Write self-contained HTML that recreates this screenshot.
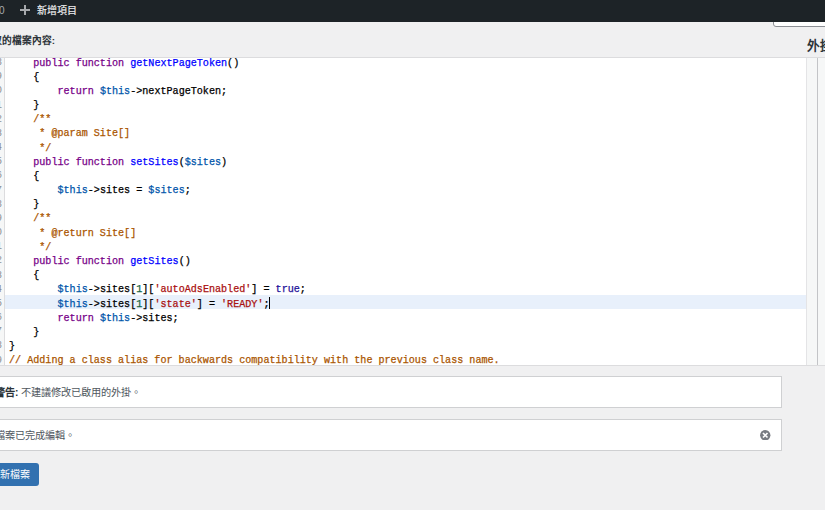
<!DOCTYPE html>
<html lang="zh-TW"><head><meta charset="utf-8">
<style>
html,body{margin:0;padding:0;}
body{width:825px;height:510px;overflow:hidden;background:#f0f0f1;position:relative;font-family:"Liberation Sans",sans-serif;color:#1d2327;}
#bar{position:absolute;left:0;top:0;width:825px;height:22px;background:#1d2327;z-index:5;}
#bar .cnt{position:absolute;left:-1px;top:4px;font-size:10px;line-height:14px;color:#a7aaad;}
#bar .plus{position:absolute;left:20px;top:5px;width:10px;height:10px;}
#bar .plus:before{content:"";position:absolute;left:4px;top:0;width:2px;height:10px;background:#a7aaad;}
#bar .plus:after{content:"";position:absolute;left:0;top:4px;width:10px;height:2px;background:#a7aaad;}
#bar .new{position:absolute;left:37px;top:3.5px;font-size:10px;line-height:14px;color:#f0f0f1;-webkit-text-stroke:0.15px #f0f0f1;}
#sel{position:absolute;left:773px;top:10px;width:80px;height:15px;background:#fff;border:1px solid #8c8f94;border-radius:3px;}
#title{position:absolute;left:-18.2px;top:34.3px;font-size:9.7px;font-weight:bold;line-height:14px;color:#2c3338;white-space:nowrap;}
#side{position:absolute;left:806.8px;top:37.8px;font-size:12.6px;letter-spacing:0.6px;font-weight:bold;line-height:16px;color:#2c3338;white-space:nowrap;}
#ed{position:absolute;left:0;top:57px;width:825px;height:309px;background:#fff;overflow:hidden;border-top:1px solid #dcdcde;border-bottom:1px solid #dcdcde;box-sizing:border-box;}
#gut{position:absolute;left:-30px;top:0;width:34px;height:100%;background:#f6f7f7;border-right:1px solid #dcdcde;}
#vs1{position:absolute;left:806px;top:0;width:11px;height:100%;background:#f6f7f7;border-left:1px solid #e4e4e6;box-sizing:border-box;}
#vs2{position:absolute;left:817px;top:0;width:10px;height:100%;background:#f6f7f7;border-left:1px solid #c3c4c7;box-sizing:border-box;}
.ln{position:absolute;left:5px;width:801px;height:14.17px;}
.ln.act{background:#e8f0fb;}
.gn{position:absolute;left:-36px;width:33px;text-align:right;z-index:2;}
.ln .gn{top:2px;font-family:"Liberation Mono",monospace;font-size:10.1px;line-height:14.17px;color:#8c8f94;}
.tx{position:absolute;left:4px;top:2.5px;font-family:"Liberation Mono",monospace;font-size:10.1px;line-height:14.17px;white-space:pre;color:#000;-webkit-text-stroke:0.25px;}
.k{color:#770088}.d{color:#0000ff}.v{color:#0055aa}.s{color:#aa1111}.c{color:#aa5500}.a{color:#221199}.n{color:#116644}
.cur{display:inline-block;width:1px;height:12px;background:#000;vertical-align:-2px;margin-left:-1px;}
.notice{position:absolute;left:-20px;width:801.5px;background:#fff;border:1px solid #cfd0d2;box-sizing:border-box;font-size:10px;line-height:14px;color:#50575e;}
#n1{top:376px;height:31.5px;}
#n2{top:419px;height:32px;}
.notice .t{position:absolute;top:10px;white-space:nowrap;font-size:10.2px;}
#n1 .t{left:14.1px;top:9px;}
.notice b{color:#2c3338;}
#n2 .t{left:14px;top:9.3px;}
#x{position:absolute;left:760px;top:429.5px;width:10.5px;height:10.5px;}
#btn{position:absolute;left:-20px;top:462.5px;width:58.5px;height:23px;background:#3271b0;border-radius:3px;color:#fff;font-size:10px;line-height:23px;}
#btn span{position:absolute;left:10px;top:0.3px;white-space:nowrap;}
</style></head><body>
<div id="bar"><div class="cnt">0</div><div class="plus"></div><div class="new">新增項目</div></div>
<div id="sel"></div>
<div id="title">選取的檔案內容:</div>
<div id="side">外掛檔案</div>
<div id="ed">
<div id="gut"></div>
<div style="position:absolute;left:0;top:-58px;width:825px;height:400px;">
<div class="ln" style="top:54.00px"><div class="gn">108</div><div class="tx">    <span class="k">public</span> <span class="k">function</span> <span class="d">getNextPageToken</span>()</div></div>
<div class="ln" style="top:68.17px"><div class="gn">109</div><div class="tx">    {</div></div>
<div class="ln" style="top:82.34px"><div class="gn">110</div><div class="tx">        <span class="k">return</span> <span class="v">$this</span>-&gt;nextPageToken;</div></div>
<div class="ln" style="top:96.51px"><div class="gn">111</div><div class="tx">    }</div></div>
<div class="ln" style="top:110.68px"><div class="gn">112</div><div class="tx">    <span class="c">/**</span></div></div>
<div class="ln" style="top:124.85px"><div class="gn">113</div><div class="tx">     <span class="c">* @param Site[]</span></div></div>
<div class="ln" style="top:139.02px"><div class="gn">114</div><div class="tx">     <span class="c">*/</span></div></div>
<div class="ln" style="top:153.19px"><div class="gn">115</div><div class="tx">    <span class="k">public</span> <span class="k">function</span> <span class="d">setSites</span>(<span class="v">$sites</span>)</div></div>
<div class="ln" style="top:167.36px"><div class="gn">116</div><div class="tx">    {</div></div>
<div class="ln" style="top:181.53px"><div class="gn">117</div><div class="tx">        <span class="v">$this</span>-&gt;sites = <span class="v">$sites</span>;</div></div>
<div class="ln" style="top:195.70px"><div class="gn">118</div><div class="tx">    }</div></div>
<div class="ln" style="top:209.87px"><div class="gn">119</div><div class="tx">    <span class="c">/**</span></div></div>
<div class="ln" style="top:224.04px"><div class="gn">120</div><div class="tx">     <span class="c">* @return Site[]</span></div></div>
<div class="ln" style="top:238.21px"><div class="gn">121</div><div class="tx">     <span class="c">*/</span></div></div>
<div class="ln" style="top:252.38px"><div class="gn">122</div><div class="tx">    <span class="k">public</span> <span class="k">function</span> <span class="d">getSites</span>()</div></div>
<div class="ln" style="top:266.55px"><div class="gn">123</div><div class="tx">    {</div></div>
<div class="ln" style="top:280.72px"><div class="gn">124</div><div class="tx">        <span class="v">$this</span>-&gt;sites[<span class="n">1</span>][<span class="s">&#x27;autoAdsEnabled&#x27;</span>] = <span class="a">true</span>;</div></div>
<div class="ln act" style="top:294.89px"><div class="gn">125</div><div class="tx">        <span class="v">$this</span>-&gt;sites[<span class="n">1</span>][<span class="s">&#x27;state&#x27;</span>] = <span class="s">&#x27;READY&#x27;</span>;<span class="cur"></span></div></div>
<div class="ln" style="top:309.06px"><div class="gn">126</div><div class="tx">        <span class="k">return</span> <span class="v">$this</span>-&gt;sites;</div></div>
<div class="ln" style="top:323.23px"><div class="gn">127</div><div class="tx">    }</div></div>
<div class="ln" style="top:337.40px"><div class="gn">128</div><div class="tx">}</div></div>
<div class="ln" style="top:351.57px"><div class="gn">129</div><div class="tx"><span class="c">// Adding a class alias for backwards compatibility with the previous class name.</span></div></div>
</div>
<div id="vs1"></div><div id="vs2"></div>
</div>
<div class="notice" id="n1"><div class="t"><b>警告:</b> 不建議修改已啟用的外掛。</div></div>
<div class="notice" id="n2"><div class="t">檔案已完成編輯。</div></div>
<svg id="x" viewBox="0 0 21 21"><circle cx="10.5" cy="10.5" r="10.3" fill="#787c82"/><path d="M6 6L15 15M15 6L6 15" stroke="#fff" stroke-width="3.4"/></svg>
<div id="btn"><span>更新檔案</span></div>
</body></html>
